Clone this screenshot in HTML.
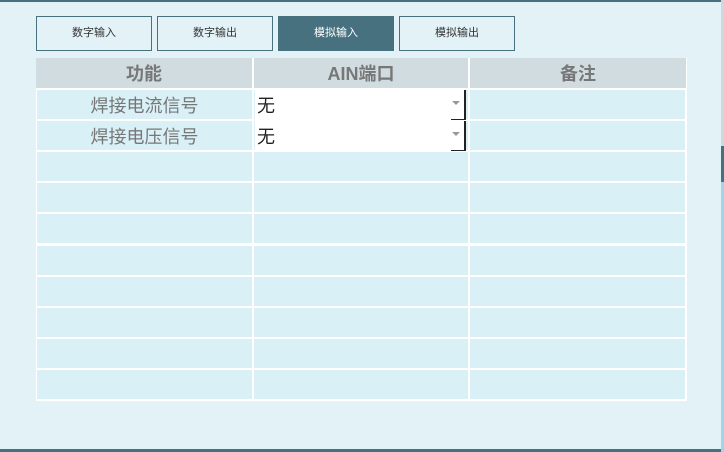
<!DOCTYPE html><html><head><meta charset="utf-8"><style>
body{margin:0;width:724px;height:452px;overflow:hidden;background:#e3f2f7;position:relative;font-family:"Liberation Sans","Noto Sans CJK SC",sans-serif}
.a{position:absolute}
.btn{position:absolute;top:16px;width:114px;height:33px;border:1px solid #47717f;background:#e3f2f7;font-size:11px;color:#333;text-align:center;line-height:33px}
.sel{background:#47717f;color:#fff}
.c{position:absolute;background:#d9f0f6}
.h{position:absolute;background:#d0dce0;color:#777;font-weight:bold;font-size:18px;text-align:center;line-height:33px}
.f{color:#777;font-size:18px;text-align:center;line-height:33px}
.dd{position:absolute;left:255px;width:211px;height:29px;background:#fff;border-right:2px solid #222;font-size:18px;line-height:33px;color:#222;padding-left:2px;box-sizing:border-box}
.dd:after{content:"";position:absolute;right:4px;top:11px;border:4px solid transparent;border-top:4px solid #999}
.dd i{position:absolute;right:-2px;bottom:-1px;width:15px;height:1px;background:#222}
</style></head><body>
<div class="a" style="left:0;top:0;width:724px;height:2px;background:#47717f"></div>
<div class="a" style="left:0;top:449px;width:724px;height:3px;background:#47717f"></div>
<div class="a" style="left:721px;top:0;width:3px;height:452px;background:#cfd8db"></div>
<div class="a" style="left:721px;top:146px;width:3px;height:36px;background:#47717f"></div>
<div class="a" style="left:721px;top:182px;width:3px;height:270px;background:#9fd6e6"></div>
<div class="btn" style="left:36px">数字输入</div>
<div class="btn" style="left:157px">数字输出</div>
<div class="btn sel" style="left:278px">模拟输入</div>
<div class="btn" style="left:399px">模拟输出</div>
<div class="a" style="left:36px;top:58px;width:651px;height:343px;background:#fff"></div>
<div class="h" style="left:36px;top:58px;width:216px;height:30px">功能</div>
<div class="h" style="left:254px;top:58px;width:214px;height:30px">AIN端口</div>
<div class="h" style="left:470px;top:58px;width:216px;height:30px">备注</div>
<div id="rows"></div>
<script>
var r=document.getElementById('rows'),h='';
for(var i=0;i<10;i++){var t=90+i*31.1;
h+='<div class="c f" style="left:37px;top:'+t+'px;width:215px;height:29px">'+(i==0?'焊接电流信号':i==1?'焊接电压信号':'')+'</div>';
h+='<div class="c" style="left:254px;top:'+t+'px;width:214px;height:29px"></div>';
h+='<div class="c" style="left:470px;top:'+t+'px;width:215px;height:29px"></div>';}
h+='<div class="dd" style="top:90px">无<i></i></div><div class="dd" style="top:121px">无<i></i></div>';
r.innerHTML=h;
</script>
</body></html>
